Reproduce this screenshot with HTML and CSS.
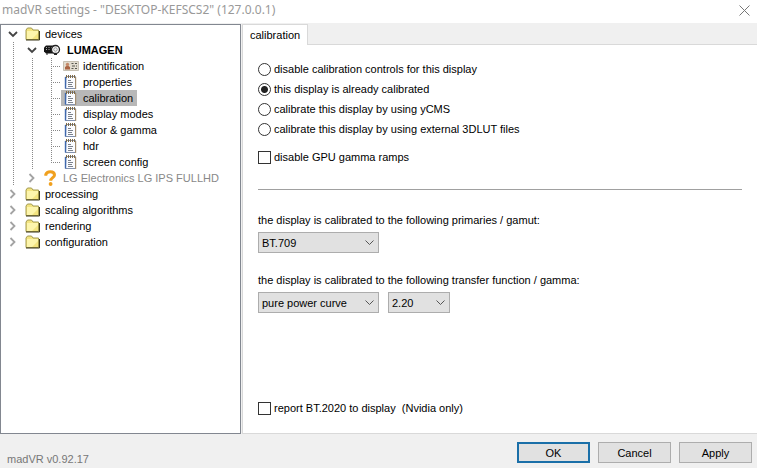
FILE: index.html
```html
<!DOCTYPE html>
<html lang="en">
<head>
    <meta charset="UTF-8">
    <title>madVR settings</title>
    <link rel="stylesheet" href="styles.css">
</head>
<body>
    <!-- shared icons -->
    <svg class="icon-defs" aria-hidden="true">
        <symbol id="down" viewBox="0 0 10 10">
            <path d="M1 3l4 4 4-4" fill="none" stroke="#444" stroke-width="1.800"/>
        </symbol>
        <symbol id="right" viewBox="0 0 10 10">
            <path d="M2.500 1l4 4-4 4" fill="none" stroke="#a3a3a3" stroke-width="1.800"/>
        </symbol>
        <symbol id="folder" viewBox="0 0 16 14">
            <path d="M1 12.500V3l1.500-2h4L8 3h5.500v9.500z" fill="#f3e480" stroke="#a39a50"/>
            <path d="M2 4h11v2L7 12H2z" fill="#fdf5ac"/>
            <path d="M1 13h13.500V4" fill="none" stroke="#3a3718"/>
        </symbol>
        <symbol id="page" viewBox="0 0 16 16">
            <path d="M3 2.500h9.500v12H2.500z" fill="#fbfcff" stroke="#8291ad"/>
            <path d="M2.500 3v11.500" stroke="#3e68ad" stroke-width="1.400"/>
            <path d="M12.700 3v12" stroke="#a98d63"/>
            <path d="M3.500 1v3M5.500 1v3M7.500 1v3M9.500 1v3M11.500 1v3" stroke="#806b46"/>
            <path d="M5 6.500h3M5 8.500h5M5 10.500h4M5 12.500h5" stroke="#7c828c"/>
        </symbol>
    </svg>

    <header class="title-bar">
        <h1>madVR settings - "DESKTOP-KEFSCS2" (127.0.0.1)</h1>
        <button class="close" aria-label="Close">
            <svg width="11" height="11" viewBox="0 0 11 11"><path d="M.5.5l10 10M10.500.5l-10 10" stroke="#777"/></svg>
        </button>
    </header>

    <main class="content">
        <nav class="tree">
            <ul>
                <li>
                    <div class="row">
                        <button class="toggle" aria-label="Collapse devices"><svg><use href="#down"/></svg></button>
                        <span class="item"><svg class="folder"><use href="#folder"/></svg>devices</span>
                    </div>
                    <ul class="branch">
                        <li>
                            <div class="row">
                                <button class="toggle" aria-label="Collapse LUMAGEN"><svg><use href="#down"/></svg></button>
                                <span class="item device">
                                    <svg viewBox="0 0 18 12">
                                        <path d="M3 1.500h10v8H3l-2-2v-4z" fill="#151515"/>
                                        <path d="M3 3.500h1M5.500 3.500h1M8 3.500h1M3 5.500h1M5.500 5.500h1" stroke="#aaa"/>
                                        <circle cx="12.500" cy="5.500" r="4" fill="#fff" stroke="#222" stroke-width="1.300"/>
                                        <circle cx="12.500" cy="5.500" r="1.800" fill="#eee" stroke="#888" stroke-width=".8"/>
                                        <path d="M3 10h2M11 10.500h3" stroke="#222"/>
                                    </svg>
                                    LUMAGEN
                                </span>
                            </div>
                            <ul class="branch">
                                <li class="row leaf">
                                    <span class="item">
                                        <svg viewBox="0 0 16 16">
                                            <path d="M.5 3.500h15v9H.5z" fill="#e2ddd0" stroke="#c5bfb1"/>
                                            <path d="M2 11.500V9l1.500-1h2L7 9v2.500z" fill="#ab6544"/>
                                            <circle cx="4.500" cy="6.500" r="1.700" fill="#c58a6a"/>
                                            <path d="M8.500 5.500h2M12 5.500h2M9 8h3M13 8h1M8.500 10.500h2M12 10.500h2" stroke="#56564f"/>
                                        </svg>
                                        identification
                                    </span>
                                </li>
                                <li class="row leaf"><span class="item"><svg><use href="#page"/></svg>properties</span></li>
                                <li class="row leaf"><span class="item selected"><svg><use href="#page"/></svg>calibration</span></li>
                                <li class="row leaf"><span class="item"><svg><use href="#page"/></svg>display modes</span></li>
                                <li class="row leaf"><span class="item"><svg><use href="#page"/></svg>color &amp; gamma</span></li>
                                <li class="row leaf"><span class="item"><svg><use href="#page"/></svg>hdr</span></li>
                                <li class="row leaf"><span class="item"><svg><use href="#page"/></svg>screen config</span></li>
                            </ul>
                        </li>
                        <li>
                            <div class="row">
                                <button class="toggle" aria-label="Expand LG Electronics"><svg><use href="#right"/></svg></button>
                                <span class="item unknown">
                                    <svg viewBox="0 0 16 16">
                                        <path d="M2.800 5.800V4.500C3.500 2.300 5.200 1.700 7.200 1.700c2.600 0 4.300 1.200 4.300 3.200 0 2.800-3.800 2.700-3.800 5.900" fill="none" stroke="#f0a01e" stroke-width="3"/>
                                        <circle cx="7.600" cy="14" r="1.900" fill="#f0a01e"/>
                                    </svg>
                                    LG Electronics LG IPS FULLHD
                                </span>
                            </div>
                        </li>
                    </ul>
                </li>
                <li class="row">
                    <button class="toggle" aria-label="Expand processing"><svg><use href="#right"/></svg></button>
                    <span class="item"><svg class="folder"><use href="#folder"/></svg>processing</span>
                </li>
                <li class="row">
                    <button class="toggle" aria-label="Expand scaling algorithms"><svg><use href="#right"/></svg></button>
                    <span class="item"><svg class="folder"><use href="#folder"/></svg>scaling algorithms</span>
                </li>
                <li class="row">
                    <button class="toggle" aria-label="Expand rendering"><svg><use href="#right"/></svg></button>
                    <span class="item"><svg class="folder"><use href="#folder"/></svg>rendering</span>
                </li>
                <li class="row">
                    <button class="toggle" aria-label="Expand configuration"><svg><use href="#right"/></svg></button>
                    <span class="item"><svg class="folder"><use href="#folder"/></svg>configuration</span>
                </li>
            </ul>
        </nav>

        <section class="settings">
            <div class="tabs">
                <button class="tab">calibration</button>
            </div>
            <form class="panel" id="settingsForm">
                <div class="options">
                    <label class="option"><input type="radio" name="mode"> disable calibration controls for this display</label>
                    <label class="option"><input type="radio" name="mode" checked> this display is already calibrated</label>
                    <label class="option"><input type="radio" name="mode"> calibrate this display by using yCMS</label>
                    <label class="option"><input type="radio" name="mode"> calibrate this display by using external 3DLUT files</label>
                </div>
                <label class="option ramps"><input type="checkbox"> disable GPU gamma ramps</label>
                <hr>
                <div class="field">
                    <label for="gamut">the display is calibrated to the following primaries / gamut:</label>
                    <div class="selects">
                        <select id="gamut" class="wide"><option>BT.709</option></select>
                    </div>
                </div>
                <div class="field">
                    <label for="curve">the display is calibrated to the following transfer function / gamma:</label>
                    <div class="selects">
                        <select id="curve" class="wide"><option>pure power curve</option></select>
                        <select aria-label="gamma"><option>2.20</option></select>
                    </div>
                </div>
                <label class="option report"><input type="checkbox"> report BT.2020 to display&nbsp; (Nvidia only)</label>
            </form>
        </section>
    </main>

    <footer class="footer">
        <span class="version">madVR v0.92.17</span>
        <button class="btn primary" form="settingsForm">OK</button>
        <button class="btn">Cancel</button>
        <button class="btn">Apply</button>
    </footer>
</body>
</html>
```
FILE: styles.css
```css
* {
    box-sizing: border-box;
}
body {
    margin: 0;
    min-height: 100vh;
    display: flex;
    flex-direction: column;
    background-color: #f0f0f0;
    color: #000;
    font-family: Tahoma, "Liberation Sans", sans-serif;
    font-size: 11px;
    line-height: 16px;
}
button, select, input {
    font: inherit;
    color: inherit;
    margin: 0;
}
ul {
    list-style: none;
    margin: 0;
    padding: 0;
}
.icon-defs {
    display: none;
}

/* title bar */
.title-bar {
    display: flex;
    justify-content: space-between;
    align-items: center;
    height: 23px;
    padding: 0 7px 3px 2px;
    background-color: white;
}
.title-bar h1 {
    margin: 0;
    font-family: "Noto Sans", sans-serif;
    font-size: 12px;
    font-weight: normal;
    color: #999;
}
.close {
    display: flex;
    padding: 0;
    border: none;
    background: none;
}

.content {
    flex: 1;
    display: flex;
    gap: 1px;
    padding-top: 1px;
}

/* tree */
.tree {
    width: 241px;
    flex-shrink: 0;
    padding: 1px 0 0 3px;
    background-color: white;
    border: 1px solid #828790;
}
.row {
    display: flex;
    height: 16px;
}
.toggle {
    display: flex;
    align-items: center;
    justify-content: center;
    width: 19px;
    padding: 0 2px 0 0;
    border: none;
    background: none;
}
.toggle svg {
    width: 10px;
    height: 10px;
}
.branch {
    padding-left: 19px;
    background: repeating-linear-gradient(#888 0 1px, transparent 1px 2px) 9px 0 / 1px 100% no-repeat;
}
.leaf::before {
    content: "";
    width: 19px;
    background:
        repeating-linear-gradient(#888 0 1px, transparent 1px 2px) 9px 0 / 1px 100% no-repeat,
        repeating-linear-gradient(90deg, #888 0 1px, transparent 1px 2px) 9px 8px / 10px 1px no-repeat;
}
.leaf:last-child::before {
    background-size: 1px 8px, 10px 1px;
}
.item {
    display: flex;
    align-items: center;
    gap: 4px;
    padding: 0 4px 0 2px;
    white-space: nowrap;
}
.item svg {
    width: 16px;
    height: 16px;
}
.item .folder {
    height: 14px;
}
.item.device {
    gap: 6px;
    padding-left: 1px;
    font-weight: bold;
}
.item.device svg {
    width: 18px;
    height: 12px;
}
.item.unknown {
    padding-left: 1px;
    color: #888;
}
.item.selected {
    background-color: #b8b8b8;
}

/* settings */
.settings {
    flex: 1;
    display: flex;
    flex-direction: column;
}
.tabs {
    display: flex;
    height: 21px;
    border-bottom: 1px solid #d9d9d9;
}
.tab {
    height: 21px;
    padding: 0 7px;
    background-color: white;
    border: 1px solid #d9d9d9;
    border-bottom: none;
}
.panel {
    flex: 1;
    display: flex;
    flex-direction: column;
    align-items: flex-start;
    padding: 14px 15px 15px;
    background-color: white;
    border: 1px solid #d9d9d9;
    border-width: 0 0 1px 1px;
}
.option {
    display: flex;
    align-items: center;
    gap: 3px;
    height: 20px;
}
.option input {
    appearance: none;
    width: 13px;
    height: 13px;
    border: 1px solid #333;
    background-color: white;
}
.option input[type="radio"] {
    border-radius: 50%;
}
.option input[type="radio"]:checked {
    background-image: radial-gradient(circle, #222 3px, transparent 4px);
}
.option input[type="checkbox"]:checked {
    background-color: #333;
}
.ramps {
    margin-top: 8px;
}
.panel hr {
    width: 100%;
    margin: 22px 0;
    border: none;
    border-top: 1px solid #a0a0a0;
}
.field {
    display: flex;
    flex-direction: column;
    gap: 4px;
    margin-bottom: 19px;
}
.selects {
    display: flex;
    gap: 9px;
}
select {
    appearance: none;
    width: 62px;
    height: 21px;
    padding: 0 3px;
    border: 1px solid #adadad;
    border-radius: 0;
    background: #e1e1e1 url("data:image/svg+xml,%3Csvg xmlns='http://www.w3.org/2000/svg' width='9' height='6'%3E%3Cpath d='M.5.5l4 4 4-4' fill='none' stroke='%23555'/%3E%3C/svg%3E") no-repeat right 4px center;
}
select.wide {
    width: 121px;
}
.report {
    margin-top: auto;
}

/* footer */
.footer {
    display: flex;
    gap: 8px;
    min-height: 34px;
    padding: 8px 5px 3px 7px;
}
.version {
    align-self: flex-end;
    margin-right: auto;
    color: #777;
    line-height: 12px;
}
.btn {
    width: 73px;
    height: 21px;
    padding: 0;
    background-color: #e1e1e1;
    border: 1px solid #adadad;
}
.btn.primary {
    border: 2px solid #1a6fa8;
}
```
